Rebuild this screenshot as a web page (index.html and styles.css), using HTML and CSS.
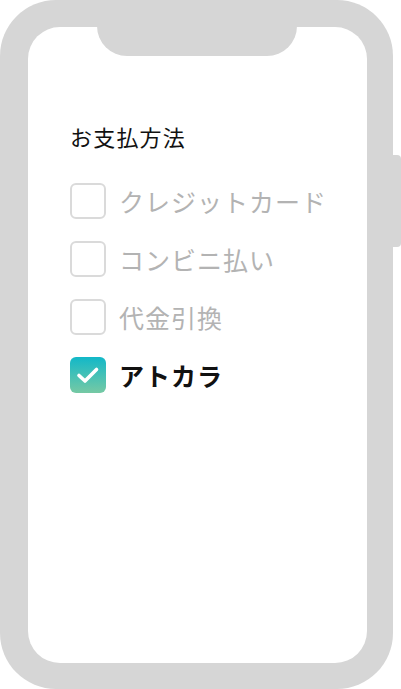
FILE: index.html
```html
<!DOCTYPE html>
<html lang="ja">
<head>
<meta charset="utf-8">
<link rel="stylesheet" href="styles.css">
</head>
<body>
<div class="phone">
  <div class="side-button"></div>
  <div class="screen">
    <div class="notch"></div>
    <h1 class="title">お支払方法</h1>
    <ul class="options">
      <li class="option"><span class="box"></span><span class="label">クレジットカード</span></li>
      <li class="option"><span class="box"></span><span class="label">コンビニ払い</span></li>
      <li class="option"><span class="box"></span><span class="label">代金引換</span></li>
      <li class="option checked"><span class="box"><svg viewBox="0 0 36 36" width="36" height="36"><path d="M9 18.5 L15 24 L26.5 12.5" fill="none" stroke="#fff" stroke-width="3.6" stroke-linecap="round" stroke-linejoin="round"/></svg></span><span class="label">アトカラ</span></li>
    </ul>
  </div>
</div>
</body>
</html>
```
FILE: styles.css
```css
html, body {
  margin: 0;
  padding: 0;
  background: #fff;
}
body {
  width: 401px;
  height: 689px;
  font-family: "Noto Sans CJK JP", "Noto Sans", sans-serif;
  overflow: hidden;
}
.phone {
  position: relative;
  width: 393px;
  height: 689px;
  box-sizing: border-box;
  background: #d6d6d6;
  border-radius: 56px;
  padding: 27px 26px 26px 28px;
  display: flex;
}
.side-button {
  position: absolute;
  left: 393px;
  top: 155px;
  width: 8px;
  height: 92px;
  background: #d6d6d6;
  border-radius: 0 4px 4px 0;
}
.screen {
  position: relative;
  flex: 1;
  background: #fff;
  border-radius: 32px;
  padding: 94px 0 0 42px;
  display: flex;
  flex-direction: column;
}
.notch {
  position: absolute;
  top: -1px;
  left: 69px;
  width: 200px;
  height: 30px;
  background: #d6d6d6;
  border-radius: 0 0 30px 30px;
}
.title {
  margin: 0;
  font-size: 22px;
  line-height: 30px;
  font-weight: 400;
  color: #111;
  letter-spacing: 1.2px;
}
.options {
  list-style: none;
  margin: 32px 0 0;
  padding: 0;
  display: flex;
  flex-direction: column;
  gap: 22px;
}
.option {
  display: flex;
  align-items: center;
  gap: 13px;
  height: 36px;
}
.box {
  width: 36px;
  height: 36px;
  box-sizing: border-box;
  border: 2px solid #dadada;
  border-radius: 6px;
  flex: none;
}
.label {
  font-size: 25px;
  line-height: 36px;
  color: #b3b3b3;
  letter-spacing: 1px;
}
.checked .box {
  border: none;
  background: linear-gradient(180deg, #12b8c8 0%, #76c9a4 100%);
  display: flex;
}
.checked .label {
  color: #111;
  font-weight: 700;
}
```
